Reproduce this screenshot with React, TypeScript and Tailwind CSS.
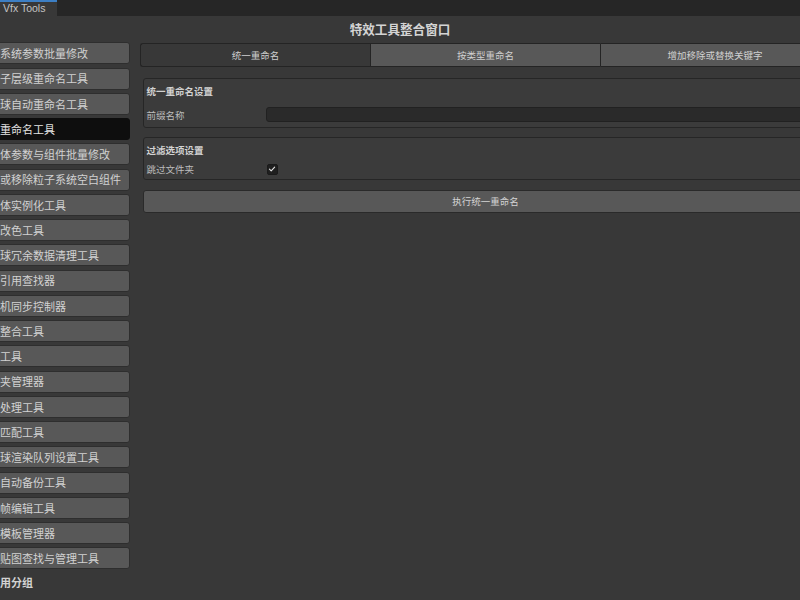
import React from "react";

const TOOLS = [
  "系统参数批量修改",
  "子层级重命名工具",
  "球自动重命名工具",
  "重命名工具",
  "体参数与组件批量修改",
  "或移除粒子系统空白组件",
  "体实例化工具",
  "改色工具",
  "球冗余数据清理工具",
  "引用查找器",
  "机同步控制器",
  "整合工具",
  "工具",
  "夹管理器",
  "处理工具",
  "匹配工具",
  "球渲染队列设置工具",
  "自动备份工具",
  "帧编辑工具",
  "模板管理器",
  "贴图查找与管理工具",
];

const TABS = ["统一重命名", "按类型重命名", "增加移除或替换关键字"];

const FONT = "font-['Noto_Sans_CJK_SC','Noto_Sans',sans-serif]";

export default function App() {
  const selected = 3;
  const activeTab = 0;

  return (
    <div className={`w-[800px] h-[600px] overflow-hidden bg-[#383838] text-[#c8c8c8] ${FONT}`}>
      {/* window tab strip */}
      <div className="h-[16px] bg-[#262626] flex">
        <div className="w-[57px] h-full bg-[#383838] border-t-[2px] border-[#3d7fc4] flex items-center pl-[3px] text-[10.5px] text-[#c4c4c4] font-['Liberation_Sans',sans-serif]">
          Vfx Tools
        </div>
      </div>

      {/* title */}
      <div className="h-[26px] flex items-center justify-center text-[12.6px] font-bold text-[#d4d4d4]">
        特效工具整合窗口
      </div>

      <div className="flex">
        {/* sidebar */}
        <div className="w-[130px] shrink-0 flex flex-col gap-[3.25px] pt-[0.3px]">
          {TOOLS.map((t, i) => (
            <div
              key={t}
              className={`h-[22px] shrink-0 flex items-center -ml-[4px] pl-[3px] rounded-[3px] border whitespace-nowrap overflow-hidden text-[11px] ${
                i === selected
                  ? "bg-[#0e0e0e] border-[#0e0e0e] text-[#e4e4e4]"
                  : "bg-[#585858] border-[#2e2e2e] text-[#d2d2d2]"
              }`}
            >
              {t}
            </div>
          ))}
          <div className="h-[14px] mt-[3px] flex items-center text-[11px] font-bold text-[#d2d2d2] whitespace-nowrap">
            用分组
          </div>
        </div>

        {/* content */}
        <div className="ml-[10px] w-[690px] shrink-0 pt-[1.3px]">
          <div className="flex h-[24px]">
            {TABS.map((t, i) => (
              <div
                key={t}
                className={`w-[230px] flex items-center justify-center text-[9.5px] border-y border-[#242424] ${
                  i === 0 ? "rounded-l-[3px] border-l" : "border-l"
                } ${i === TABS.length - 1 ? "rounded-r-[3px] border-r" : ""} ${
                  i === activeTab ? "bg-[#383838] text-[#cfcfcf]" : "bg-[#585858] text-[#d0d0d0]"
                }`}
              >
                {t}
              </div>
            ))}
          </div>

          <div className="ml-[2.5px] w-[686px] mt-[11px] rounded-[3px] border border-[#262626] bg-[#3b3b3b] pt-[5px] pb-[5px] pl-[3px]">
            <div className="h-[14px] flex items-center text-[9.5px] font-bold text-[#d2d2d2]">统一重命名设置</div>
            <div className="mt-[9px] h-[15px] flex items-center">
              <div className="w-[119.5px] text-[9.5px] text-[#bdbdbd]">前缀名称</div>
              <div className="flex-1 h-full rounded-[3px] bg-[#2a2a2a] border border-[#212121]" />
            </div>
          </div>

          <div className="ml-[2.5px] w-[686px] mt-[9px] rounded-[3px] border border-[#262626] bg-[#3b3b3b] pt-[5px] pb-[2px] pl-[3px]">
            <div className="h-[14px] flex items-center text-[9.5px] font-bold text-[#d2d2d2]">过滤选项设置</div>
            <div className="mt-[4px] h-[16px] flex items-center">
              <div className="w-[120px] text-[9.5px] text-[#bdbdbd]">跳过文件夹</div>
              <div className="w-[11px] h-[11px] rounded-[2px] bg-[#1f1f1f] border border-[#1a1a1a] flex items-center justify-center">
                <svg viewBox="0 0 10 10" className="w-[8px] h-[8px]">
                  <path d="M1.8 5.2 L4 7.3 L8.3 2.6" fill="none" stroke="#e2e2e2" strokeWidth="1.4" strokeLinecap="round" strokeLinejoin="round" />
                </svg>
              </div>
            </div>
          </div>

          <div className="ml-[2.5px] w-[686px] mt-[10px] h-[22.5px] rounded-[3px] border border-[#2a2a2a] bg-[#585858] flex items-center justify-center text-[9.5px] text-[#d4d4d4]">
            执行统一重命名
          </div>
        </div>
      </div>
    </div>
  );
}
